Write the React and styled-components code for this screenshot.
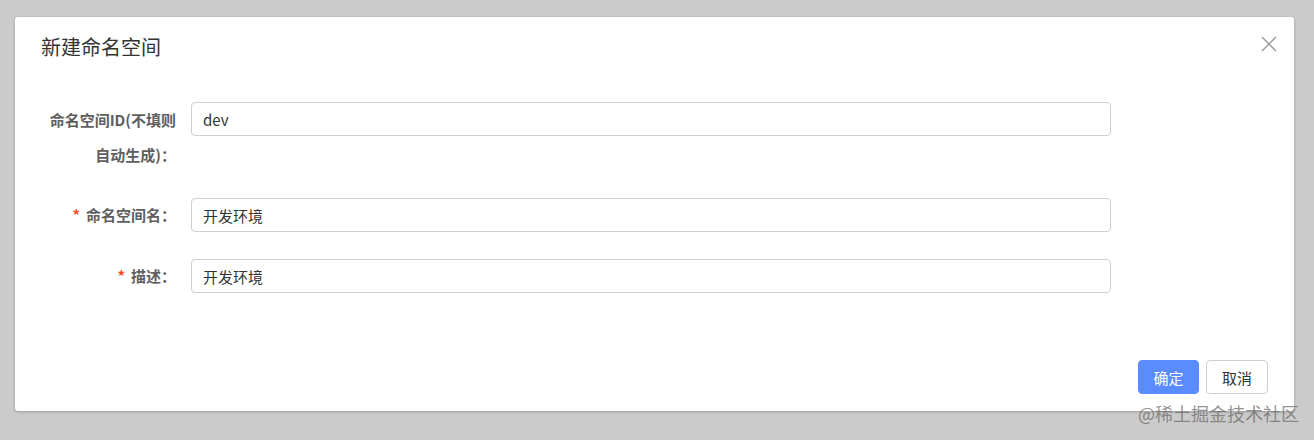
import React from 'react';
import styled, { createGlobalStyle } from 'styled-components';

const GlobalStyle = createGlobalStyle`
  html, body {
    margin: 0;
    padding: 0;
    background: #cbcbcb;
    font-family: "Noto Sans CJK SC", "Liberation Sans", sans-serif;
  }
  * { box-sizing: border-box; }
`;

const Page = styled.div`
  position: relative;
  width: 1314px;
  height: 440px;
  padding: 17px 20px 0 15px;
  overflow: hidden;
`;

const Dialog = styled.div`
  width: 1279px;
  height: 394px;
  background: #fff;
  border-radius: 3px;
  box-shadow: 0 1px 3px rgba(0, 0, 0, 0.25);
  display: flex;
  flex-direction: column;
`;

const Header = styled.div`
  display: flex;
  justify-content: space-between;
  align-items: flex-start;
  padding: 20px 17px 0 26px;
`;

const Title = styled.div`
  font-size: 20px;
  line-height: 20px;
  color: #333;
`;

const CloseButton = styled.button`
  border: 0;
  background: none;
  padding: 0;
  margin-top: -1px;
  width: 16px;
  height: 16px;
  cursor: pointer;
  display: flex;
  svg { display: block; }
`;

const Body = styled.form`
  flex: 1;
  padding: 45px 26px 0;
  display: flex;
  flex-direction: column;
  gap: 26px;
`;

const Row = styled.div`
  display: flex;
  align-items: flex-start;
  margin-top: ${({ $shift }) => $shift || 0}px;
`;

const Label = styled.label`
  width: 150px;
  flex-shrink: 0;
  padding: 0 15px 0 0;
  text-align: right;
  font-size: 15px;
  font-weight: 700;
  line-height: ${({ $lh }) => $lh || 34}px;
  color: #5f5f5f;
`;

const Star = styled.span`
  color: #ef4f1f;
  margin-right: 6px;
`;

const Input = styled.input`
  width: 920px;
  height: 34px;
  border: 1px solid #cfcfcf;
  border-radius: 4px;
  padding: 0 11px;
  font-family: inherit;
  font-size: 15px;
  color: #333;
  outline: none;
  background: #fff;
`;

const Footer = styled.div`
  display: flex;
  justify-content: flex-end;
  gap: 7px;
  padding: 0 26px 17px 0;
`;

const Button = styled.button`
  height: 34px;
  width: ${({ $w }) => $w}px;
  border-radius: 4px;
  font-family: inherit;
  font-size: 15px;
  cursor: pointer;
  border: 1px solid ${({ $primary }) => ($primary ? '#5b8cff' : '#cfcfcf')};
  background: ${({ $primary }) => ($primary ? '#5b8cff' : '#fff')};
  color: ${({ $primary }) => ($primary ? '#fff' : '#333')};
`;

const Watermark = styled.div`
  position: absolute;
  left: 1138px;
  top: 402px;
  font-size: 18px;
  line-height: 22px;
  color: rgba(110, 110, 110, 0.75);
  white-space: nowrap;
`;

const CloseIcon = () => (
  <svg width="16" height="16" viewBox="0 0 16 16">
    <path d="M1 1 L15 15 M15 1 L1 15" stroke="#9a9a9a" strokeWidth="1.4" fill="none" />
  </svg>
);

const App = () => (
  <>
    <GlobalStyle />
    <Page>
      <Dialog>
        <Header>
          <Title>新建命名空间</Title>
          <CloseButton type="button" aria-label="关闭">
            <CloseIcon />
          </CloseButton>
        </Header>
        <Body>
          <Row>
            <Label $lh={35}>命名空间ID(不填则自动生成)：</Label>
            <Input defaultValue="dev" />
          </Row>
          <Row>
            <Label><Star>*</Star>命名空间名：</Label>
            <Input defaultValue="开发环境" />
          </Row>
          <Row $shift={1}>
            <Label><Star>*</Star>描述：</Label>
            <Input defaultValue="开发环境" />
          </Row>
        </Body>
        <Footer>
          <Button $primary $w={61} type="button">确定</Button>
          <Button $w={62} type="button">取消</Button>
        </Footer>
      </Dialog>
      <Watermark>@稀土掘金技术社区</Watermark>
    </Page>
  </>
);

export default App;
